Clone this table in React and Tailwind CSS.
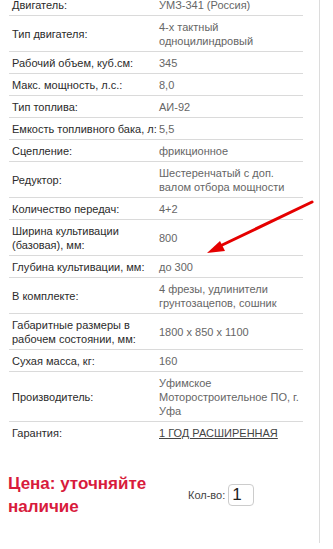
import React from "react";

const specs = [
  ["Двигатель:", "УМЗ-341 (Россия)"],
  ["Тип двигателя:", "4-х тактный одноцилиндровый"],
  ["Рабочий объем, куб.см:", "345"],
  ["Макс. мощность, л.с.:", "8,0"],
  ["Тип топлива:", "АИ-92"],
  ["Емкость топливного бака, л:", "5,5"],
  ["Сцепление:", "фрикционное"],
  ["Редуктор:", "Шестеренчатый с доп. валом отбора мощности"],
  ["Количество передач:", "4+2"],
  ["Ширина культивации (базовая), мм:", "800"],
  ["Глубина культивации, мм:", "до 300"],
  ["В комплекте:", "4 фрезы, удлинители грунтозацепов, сошник"],
  ["Габаритные размеры в рабочем состоянии, мм:", "1800 x 850 x 1100"],
  ["Сухая масса, кг:", "160"],
  ["Производитель:", "Уфимское Моторостроительное ПО, г. Уфа"],
];

export default function App() {
  return (
    <div className="relative w-[333px] h-[549px] overflow-hidden bg-white font-['Liberation_Sans',Arial,sans-serif]">
      <div className="w-[320px] h-full border-r border-[#dcdcdc]">
        {/* Specs table */}
        <table className="-mt-[6px] ml-[9px] w-[294px] table-fixed border-collapse text-[11px] leading-[14px]">
          <tbody>
            {specs.map(([label, value]) => (
              <tr key={label} className="border-b border-[#dadada]">
                <td className="w-[150px] pt-[4px] pb-[3px] pl-[3px] pr-0 align-middle text-[#2b2b2b]">
                  {label}
                </td>
                <td className="pt-[4px] pb-[3px] pl-0 pr-[4px] align-middle text-[#666]">
                  {value}
                </td>
              </tr>
            ))}
            <tr>
              <td className="pt-[4px] pb-[3px] pl-[3px] pr-0 align-middle text-[#2b2b2b]">Гарантия:</td>
              <td className="pt-[4px] pb-[3px] pl-0 pr-[4px] align-middle text-[#444]">
                <span className="underline">1 ГОД РАСШИРЕННАЯ</span>
              </td>
            </tr>
          </tbody>
        </table>

        {/* Price + quantity */}
        <div className="mt-[29px] flex items-center">
          <div className="w-[188px] pl-[8px] text-[17px] leading-[23px] font-bold text-[#d81b3c]">
            Цена: уточняйте наличие
          </div>
          <div className="flex items-center gap-[3px] text-[11px] text-[#444]">
            <span>Кол-во:</span>
            <div className="w-[26px] h-[22px] rounded-[4px] border border-[#ccc] pl-[3px] text-[17px] leading-[20px] text-[#222]">
              1
            </div>
          </div>
        </div>
      </div>

      {/* Red annotation arrow */}
      <svg className="absolute left-0 top-0" width="333" height="549" viewBox="0 0 333 549">
        <line x1="312" y1="202" x2="218" y2="247" stroke="#e50000" strokeWidth="3" strokeLinecap="round" />
        <polygon points="207,253 220,241 225,251" fill="#e50000" />
      </svg>
    </div>
  );
}
